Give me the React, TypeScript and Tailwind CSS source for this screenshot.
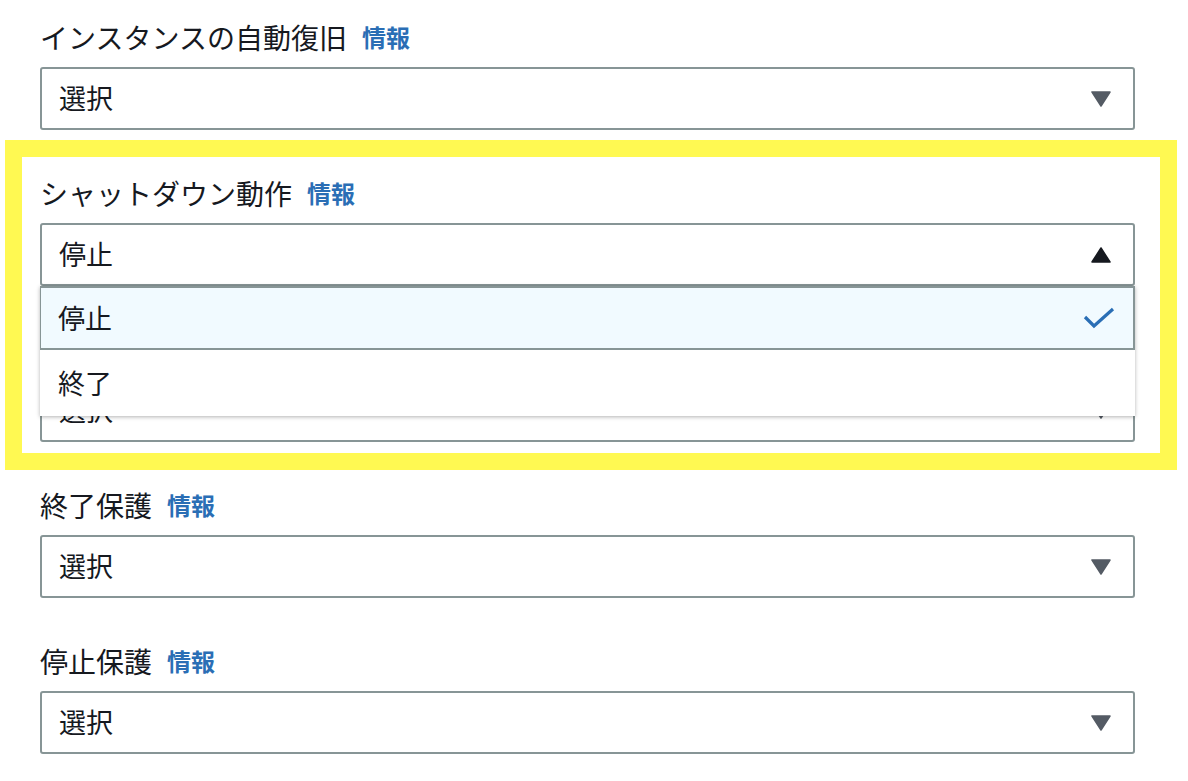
import React from 'react';

const font = { fontFamily: '"Noto Sans CJK JP", "Noto Sans", sans-serif' };

function Caret({ up = false }: { up?: boolean }) {
  return (
    <svg width="20" height="16" viewBox="0 0 20 16" className="shrink-0">
      {up ? (
        <path d="M10 1 L19 15 L1 15 Z" fill="#16191f" stroke="#16191f" strokeWidth="1.5" strokeLinejoin="round" />
      ) : (
        <path d="M1 1 L19 1 L10 15 Z" fill="#545b64" stroke="#545b64" strokeWidth="1.5" strokeLinejoin="round" />
      )}
    </svg>
  );
}

function Field({ label, value, open = false }: { label?: string; value: string; open?: boolean }) {
  return (
    <div className="flex flex-col">
      {/* label row keeps its height even when the open menu above covers it */}
      <div className="mb-[12px] flex h-[36px] items-center">
        {label && (
          <>
            <span className="text-[28px] leading-[36px] text-[#16191f]">{label}</span>
            <span className="ml-[15px] text-[24px] font-bold leading-[36px] text-[#2a6eb5]">情報</span>
          </>
        )}
      </div>
      <div className="relative">
        <div className="flex h-[63px] items-center justify-between rounded-[3px] border-2 border-[#879596] bg-white pl-[17px] pr-[22px]">
          <span className="text-[27px] text-[#16191f]">{value}</span>
          <Caret up={open} />
        </div>
        {open && (
          <div className="absolute left-0 right-0 top-full z-10 bg-white shadow-[0_1px_4px_rgba(0,0,0,0.3)]">
            <div className="flex h-[64px] items-center justify-between border border-y-2 border-r-2 border-[#879596] bg-[#f1faff] pl-[17px] pr-[18px]">
              <span className="text-[27px] text-[#16191f]">停止</span>
              <svg width="32" height="24" viewBox="0 0 32 24">
                <path d="M2 11 L11 20 L30 3" fill="none" stroke="#2a6eb5" strokeWidth="3.2" />
              </svg>
            </div>
            <div className="flex h-[66px] items-center pl-[18px]">
              <span className="text-[27px] text-[#16191f]">終了</span>
            </div>
          </div>
        )}
      </div>
    </div>
  );
}

export default function App() {
  return (
    <div className="relative min-h-[781px] w-[1188px] bg-white" style={font}>
      <div className="flex w-[1135px] flex-col gap-[45px] pl-[40px] pt-[19px]">
        <Field label="インスタンスの自動復旧" value="選択" />
        <Field label="シャットダウン動作" value="停止" open />
        <Field value="選択" />
        <Field label="終了保護" value="選択" />
        <Field label="停止保護" value="選択" />
      </div>
      <div className="pointer-events-none absolute left-[5px] top-[140px] h-[330px] w-[1172px] border-[17px] border-[#fff952]" />
    </div>
  );
}
